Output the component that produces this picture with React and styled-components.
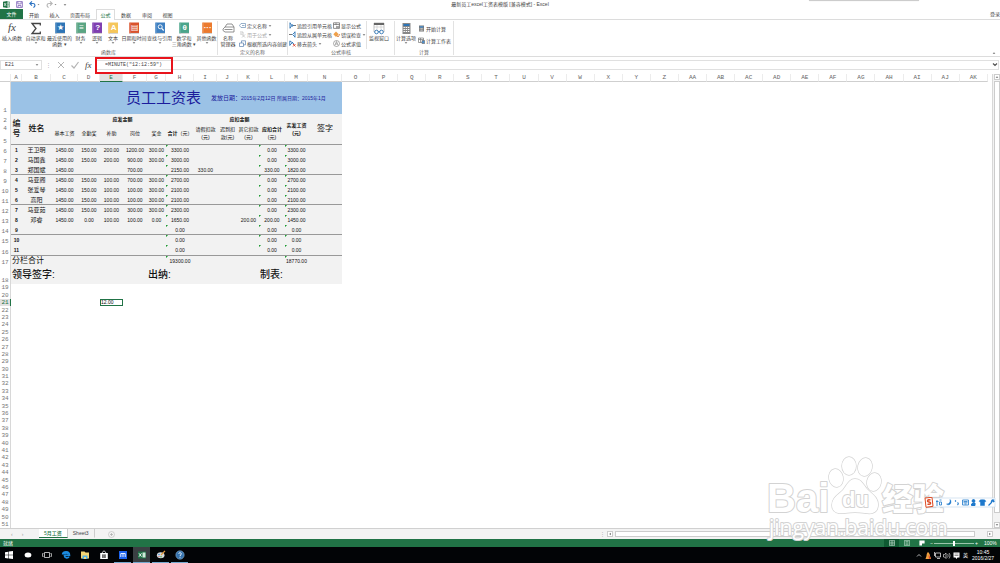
import React from 'react';
import styled, { createGlobalStyle } from 'styled-components';

const App = () => {
    return (
        <Ventana>
            <Global/>
            <BarraTitulo>
                <AccesoRapido>
                    <BotonPlano aria-label="Excel"><IconoExcel/></BotonPlano>
                    <BotonPlano aria-label="保存"><IconoGuardar/></BotonPlano>
                    <BotonPlano aria-label="撤消"><IconoDeshacer color="#2b72c2"/></BotonPlano>
                    <BotonPlano aria-label="恢复"><IconoDeshacer color="#b5b5b5" espejo/></BotonPlano>
                    <BotonPlano aria-label="自定义"><Flecha/></BotonPlano>
                </AccesoRapido>
                <Titulo>最新员工excel工资表模版 [兼容模式] - Excel</Titulo>
                <Sombra/>
            </BarraTitulo>
            <Pestanas>
                <Archivo>文件</Archivo>
                {pestanas.map(p => (
                    <Pestana key={p.texto} $ancho={p.ancho} $activa={p.texto === '公式'}>{p.texto}</Pestana>
                ))}
                <Entrar>登录</Entrar>
            </Pestanas>
            <Cinta>
                <Grupo $ancho={218}>
                    <Botones>
                        {libros.map(l => (
                            <BotonGrande key={l.texto} $ancho={l.ancho}>
                                <Libro {...l}/>
                                <span>{l.texto}</span>
                                {l.texto2 && <span>{l.texto2}</span>}
                                {l.menu && <Flecha/>}
                            </BotonGrande>
                        ))}
                    </Botones>
                    <NombreGrupo>函数库</NombreGrupo>
                </Grupo>
                <Grupo $ancho={70}>
                    <Botones>
                        <BotonGrande $ancho={20}>
                            <IconoEtiqueta/>
                            <span>名称</span>
                            <span>管理器</span>
                        </BotonGrande>
                        <Lista>
                            <BotonChico><Mini tipo="etiqueta"/>定义名称 <Flecha/></BotonChico>
                            <BotonChico $gris><Mini tipo="fx"/>用于公式 <Flecha/></BotonChico>
                            <BotonChico><Mini tipo="crear"/>根据所选内容创建</BotonChico>
                        </Lista>
                    </Botones>
                    <NombreGrupo>定义的名称</NombreGrupo>
                </Grupo>
                <Grupo $ancho={107}>
                    <Botones>
                        <Lista>
                            <BotonChico><Mini tipo="precede"/>追踪引用单元格</BotonChico>
                            <BotonChico><Mini tipo="depende"/>追踪从属单元格</BotonChico>
                            <BotonChico><Mini tipo="quitar"/>移去箭头 <Flecha/></BotonChico>
                        </Lista>
                        <Lista $borde>
                            <BotonChico><Mini tipo="mostrar"/>显示公式</BotonChico>
                            <BotonChico><Mini tipo="error"/>错误检查 <Flecha/></BotonChico>
                            <BotonChico><Mini tipo="evaluar"/>公式求值</BotonChico>
                        </Lista>
                        <BotonGrande $ancho={24}>
                            <IconoVentana/>
                            <span>监视窗口</span>
                        </BotonGrande>
                    </Botones>
                    <NombreGrupo>公式审核</NombreGrupo>
                </Grupo>
                <Grupo $ancho={59}>
                    <Botones>
                        <BotonGrande $ancho={22}>
                            <IconoCalculadora/>
                            <span>计算选项</span>
                            <Flecha/>
                        </BotonGrande>
                        <Lista $amplia>
                            <BotonChico><Mini tipo="calc"/>开始计算</BotonChico>
                            <BotonChico><Mini tipo="hoja"/>计算工作表</BotonChico>
                        </Lista>
                    </Botones>
                    <NombreGrupo>计算</NombreGrupo>
                </Grupo>
                <Plegar aria-label="折叠功能区"><Flecha arriba/></Plegar>
            </Cinta>
            <BarraFormula>
                <CajaNombre>
                    <Entrada aria-label="名称框" defaultValue="E21"/>
                    <Flecha/>
                </CajaNombre>
                <CajaBotones>
                    <Puntos>⋮</Puntos>
                    <BotonPlano aria-label="取消">
                        <svg width="8" height="8" viewBox="0 0 8 8"><path d="M1 1l6 6M7 1L1 7" stroke="#b4b4b4" strokeWidth="1"/></svg>
                    </BotonPlano>
                    <BotonPlano aria-label="输入">
                        <svg width="8" height="8" viewBox="0 0 8 8"><path d="M0.500 4.500l2.500 2.500 4.500-6" fill="none" stroke="#b4b4b4" strokeWidth="1.200"/></svg>
                    </BotonPlano>
                    <BotonFx>fx</BotonFx>
                </CajaBotones>
                <CajaFormula>
                    <Entrada aria-label="编辑栏" $formula defaultValue={'=MINUTE("12:12:59")'}/>
                    <svg width="6" height="4" viewBox="0 0 6 4"><path d="M1 0.500l2 2 2-2" fill="none" stroke="#555" strokeWidth="1.200"/></svg>
                    <Marco/>
                </CajaFormula>
            </BarraFormula>
            <Zona>
                <Hoja>
                    <colgroup>
                        <Col $ancho={11}/>
                        {anchos.map((a, i) => <Col key={i} $ancho={a}/>)}
                        {letrasExtra.map(l => <col key={l}/>)}
                    </colgroup>
                    <thead>
                        <tr>
                            <Letra/>
                            {letras.map(l => <Letra key={l} $activa={l === 'E'}>{l}</Letra>)}
                        </tr>
                    </thead>
                    <tbody>
                        <Fila $alto={32}>
                            <Numero>1</Numero>
                            <Banda colSpan={14}>
                                <Encabezado>
                                    <strong>员工工资表</strong>
                                    <em>发放日期：</em>
                                    <small>2015年2月12日 所属日期：2015年1月</small>
                                </Encabezado>
                            </Banda>
                            <Vacia colSpan={23} rowSpan={17}/>
                        </Fila>
                        <Fila $alto={10}>
                            <Numero>2</Numero>
                            <Celda rowSpan={3} $tam={8} $linea $medio>编<br/>号</Celda>
                            <Celda rowSpan={3} $tam={8} $linea $medio>姓名</Celda>
                            <Celda colSpan={6} $negrita>应发金额</Celda>
                            <Celda colSpan={4} $negrita>应扣金额</Celda>
                            <Celda rowSpan={3} $negrita $linea>实发工资<br/>(元)</Celda>
                            <Celda rowSpan={3} $tam={8} $linea>签字</Celda>
                        </Fila>
                        <Fila $alto={8}>
                            <Numero>4</Numero>
                            {['基本工资', '全勤奖', '补助', '岗位', '奖金'].map(t => <Celda key={t} rowSpan={2} $linea $alza>{t}</Celda>)}
                            <Celda rowSpan={2} $linea $alza><b>合计</b>（元）</Celda>
                            <Celda rowSpan={2} $linea $alza>请假扣款<br/>(元)</Celda>
                            <Celda rowSpan={2} $linea $alza>迟到扣<br/>款(元)</Celda>
                            <Celda rowSpan={2} $linea $alza>其它扣款<br/>(元)</Celda>
                            <Celda rowSpan={2} $linea $alza><b>应扣合计</b><br/>(元)</Celda>
                        </Fila>
                        <Fila $alto={13}><Numero>5</Numero></Fila>
                        {empleados.map((e, i) => {
                            const linea = [2, 5, 8, 10].includes(i);
                            return (
                                <Fila key={i} $alto={i === 10 ? 11 : 10}>
                                    <Numero>{i + 6}</Numero>
                                    <Celda $negrita $linea={linea}>{i + 1}</Celda>
                                    <Celda $tam={6} $linea={linea}>{e[0]}</Celda>
                                    {e.slice(1).map((v, j) => (
                                        <Celda key={j} $linea={linea} $marca={[5, 9, 10].includes(j)}>{v}</Celda>
                                    ))}
                                    <Celda $linea={linea}/>
                                </Fila>
                            );
                        })}
                        <Fila $alto={10}>
                            <Numero>17</Numero>
                            <Celda colSpan={7} $tam={8} $izq>分栏合计</Celda>
                            <Celda $marca>19300.00</Celda>
                            <Celda colSpan={4}/>
                            <Celda $marca>18770.00</Celda>
                            <Celda/>
                        </Fila>
                        <Fila $alto={18}>
                            <Numero>18</Numero>
                            <Celda colSpan={6} $tam={10} $izq $medio>领导签字:</Celda>
                            <Celda colSpan={5} $tam={10} $izq $medio>出纳:</Celda>
                            <Celda colSpan={3} $tam={10} $izq $medio>制表:</Celda>
                        </Fila>
                        {libres.map(n => n === 21 ? (
                            <tr key={n}>
                                <Numero $activa>{n}</Numero>
                                <Vacia colSpan={4}/>
                                <Seleccion>12.00</Seleccion>
                                <Vacia colSpan={32}/>
                            </tr>
                        ) : (
                            <tr key={n}>
                                <Numero>{n}</Numero>
                                <Vacia colSpan={37}/>
                            </tr>
                        ))}
                    </tbody>
                </Hoja>
                <BarraVertical>
                    <BotonScroll aria-label="向上"><Flecha arriba/></BotonScroll>
                    <PulgarVertical/>
                    <BotonScroll aria-label="向下"><Flecha/></BotonScroll>
                </BarraVertical>
            </Zona>
            <BarraHojas>
                <Navegar>
                    <BotonPlano aria-label="上一张">‹</BotonPlano>
                    <BotonPlano aria-label="下一张">›</BotonPlano>
                </Navegar>
                <PestanaHoja $activa>5月工资</PestanaHoja>
                <PestanaHoja>Sheet3</PestanaHoja>
                <Agregar aria-label="新工作表">
                    <svg width="7" height="7" viewBox="0 0 7 7"><circle cx="3.5" cy="3.5" r="3" fill="none" stroke="#bbb" strokeWidth=".6"/><path d="M3.500 2v3M2 3.500h3" stroke="#aaa" strokeWidth=".7"/></svg>
                </Agregar>
                <BarraHorizontal>
                    <Puntos>⋮</Puntos>
                    <BotonScroll aria-label="向左"><Flecha giro={90}/></BotonScroll>
                    <PulgarHorizontal/>
                    <BotonScroll aria-label="向右"><Flecha giro={-90}/></BotonScroll>
                </BarraHorizontal>
            </BarraHojas>
            <BarraEstado>
                <span>就绪</span>
                <Vistas>
                    <Vista $activa aria-label="普通"><IconoVista tipo={0}/></Vista>
                    <Vista aria-label="页面布局"><IconoVista tipo={1}/></Vista>
                    <Vista aria-label="分页预览"><IconoVista tipo={2}/></Vista>
                </Vistas>
                <Escala>
                    <BotonPlano aria-label="缩小">−</BotonPlano>
                    <Deslizador type="range" aria-label="缩放" defaultValue="50"/>
                    <BotonPlano aria-label="放大">+</BotonPlano>
                </Escala>
                <Porcentaje>100%</Porcentaje>
            </BarraEstado>
            <BarraTareas>
                {['inicio', 'voz', 'tareas', 'edge', 'carpeta', 'tienda', 'maxthon', 'excel', 'paint', 'ayuda'].map((t, i) => (
                    <Tarea key={t} aria-label={t} $abierta={i > 5} $activa={t === 'excel'}><IconoTarea tipo={t}/></Tarea>
                ))}
                <Bandeja>
                    <Bandejita/>
                    <span>英</span>
                    <Reloj><time>10:45</time><time>2016/2/27</time></Reloj>
                </Bandeja>
            </BarraTareas>
            <MarcaAgua/>
            <BarraIme/>
        </Ventana>
    )
}

const pestanas = [
    {texto: '开始', ancho: 22}, {texto: '插入', ancho: 19}, {texto: '页面布局', ancho: 32}, {texto: '公式', ancho: 19},
    {texto: '数据', ancho: 22}, {texto: '审阅', ancho: 20}, {texto: '视图', ancho: 21},
];
const libros = [
    {texto: '插入函数', ancho: 24, signo: 'fx'},
    {texto: '自动求和', ancho: 23, signo: 'Σ', menu: true},
    {texto: '最近使用的', texto2: '函数 ▾', ancho: 25, color: '#2e75b6', signo: '★'},
    {texto: '财务', ancho: 17, color: '#5aa583', signo: '≡', menu: true},
    {texto: '逻辑', ancho: 16, color: '#7f3fb0', signo: '?', menu: true},
    {texto: '文本', ancho: 16, color: '#f5c65b', signo: 'A', menu: true},
    {texto: '日期和时间', ancho: 26, color: '#d9532c', signo: '▤', menu: true},
    {texto: '查找与引用', ancho: 25, color: '#3d7fc1', signo: 'lupa', menu: true},
    {texto: '数学和', texto2: '三角函数 ▾', ancho: 24, color: '#4ba58b', signo: 'θ'},
    {texto: '其他函数', ancho: 21, color: '#eb7a2f', signo: '···', menu: true},
];
const anchos = [11, 29, 27, 22, 23, 24, 19, 28, 23, 21, 21, 26, 23, 34];
const nombreColumna = i => i < 26 ? String.fromCharCode(65 + i) : 'A' + String.fromCharCode(39 + i);
const letras = Array.from({length: 37}, (_, i) => nombreColumna(i));
const letrasExtra = letras.slice(14);
const libres = Array.from({length: 33}, (_, i) => i + 19);
const empleados = [
    ['王卫明', '1450.00', '150.00', '200.00', '1200.00', '300.00', '3300.00', '', '', '', '0.00', '3300.00'],
    ['马国鑫', '1450.00', '150.00', '200.00', '900.00', '300.00', '3000.00', '', '', '', '0.00', '3000.00'],
    ['郑国斌', '1450.00', '', '', '700.00', '', '2150.00', '330.00', '', '', '330.00', '1820.00'],
    ['马亚阁', '1450.00', '150.00', '100.00', '700.00', '300.00', '2700.00', '', '', '', '0.00', '2700.00'],
    ['张爱琴', '1450.00', '150.00', '100.00', '100.00', '300.00', '2100.00', '', '', '', '0.00', '2100.00'],
    ['高阳', '1450.00', '150.00', '100.00', '100.00', '300.00', '2100.00', '', '', '', '0.00', '2100.00'],
    ['马亚茹', '1450.00', '150.00', '100.00', '300.00', '300.00', '2300.00', '', '', '', '0.00', '2300.00'],
    ['邓睿', '1450.00', '0.00', '100.00', '100.00', '0.00', '1650.00', '', '', '200.00', '200.00', '1450.00'],
    ['', '', '', '', '', '', '0.00', '', '', '', '0.00', '0.00'],
    ['', '', '', '', '', '', '0.00', '', '', '', '0.00', '0.00'],
    ['', '', '', '', '', '', '0.00', '', '', '', '0.00', '0.00'],
];

const Flecha = ({arriba, giro}) => (
    <svg width="4" height="4" viewBox="0 0 4 4">
        <path d="M0.700 1.200h2.600l-1.300 1.600z" fill="#666" transform={`rotate(${arriba ? 180 : giro || 0} 2 2)`}/>
    </svg>
);
const IconoExcel = () => (
    <svg width="7" height="7" viewBox="0 0 8 8">
        <path d="M4 1h3.500v6H4z" fill="#fff" stroke="#217346" strokeWidth=".6"/>
        <path d="M5 2.500h2M5 4h2M5 5.500h2" stroke="#217346" strokeWidth=".6"/>
        <path d="M0 .8L5 0v8L0 7.200z" fill="#217346"/>
        <path d="M1.300 2.400l2.200 3.200M3.500 2.400L1.300 5.600" stroke="#fff" strokeWidth=".8"/>
    </svg>
);
const IconoGuardar = () => (
    <svg width="7" height="7" viewBox="0 0 7 7">
        <path d="M.6.6h5.800v5.800H.6zM1.800.6v2.300h3.400V.6M2 6.400V4.500h3v1.900" fill="none" stroke="#8064b8" strokeWidth=".8"/>
    </svg>
);
const IconoDeshacer = ({color, espejo}) => (
    <svg width="11" height="7" viewBox="0 0 11 7">
        <g transform={espejo ? 'matrix(-1 0 0 1 7 0)' : undefined} fill="none" stroke={color} strokeWidth="1.100">
            <path d="M3 .4L.8 2.500 3 4.600M1 2.500h3c2.400 0 2.600 3 .4 4"/>
        </g>
        <path d="M8.500 3h2l-1 1.200z" fill="#888"/>
    </svg>
);
const Libro = ({color, signo}) => {
    if (!color) {
        return (
            <svg width="16" height="13" viewBox="0 0 16 13" overflow="visible">
                {signo === 'fx'
                    ? <text x="8" y="9" textAnchor="middle" fontFamily="Liberation Serif, serif" fontStyle="italic" fontSize="11" fill="#444">fx</text>
                    : <path d="M12.300 3.600V1.500H4l4 5-4 5h8.300V9.400" fill="none" stroke="#444" strokeWidth="1.300"/>}
            </svg>
        );
    }
    return (
        <svg width="10" height="13" viewBox="0 0 10 13">
            <path d="M0 .5h2v11H0z" fill={color} opacity=".75"/>
            <path d="M1.500 .5H10v10.500H1.500z" fill={color}/>
            <path d="M1 11.400h9" stroke="#bbb" strokeWidth=".7"/>
            {signo === 'lupa'
                ? <g fill="none" stroke="#fff"><circle cx="5.200" cy="4.800" r="2" strokeWidth=".9"/><path d="M6.700 6.300l2 2.200" strokeWidth="1.200"/></g>
                : <text x="5.700" y="8.400" textAnchor="middle" fontFamily="Liberation Sans, DejaVu Sans, sans-serif" fontWeight="bold" fontSize="8" fill="#fff">{signo}</text>}
        </svg>
    );
};
const IconoEtiqueta = () => (
    <svg width="13" height="13" viewBox="0 0 13 13">
        <path d="M1 7l2-2h9v5H3L1 8.500zM3 5l2-3h5l2 3M2.500 7.500h8" fill="#fff" stroke="#777" strokeWidth=".8"/>
    </svg>
);
const IconoVentana = () => (
    <svg width="12" height="13" viewBox="0 0 12 13">
        <path d="M1 1h10v9H1z" fill="#fff" stroke="#999" strokeWidth=".6"/>
        <path d="M1 1h10v2H1z" fill="#666"/>
        <path d="M1 5h10M4 3v7M8 3v7" stroke="#bbb" strokeWidth=".5"/>
        <g fill="#fff" stroke="#2e75b6" strokeWidth=".9"><circle cx="3.500" cy="10" r="1.800"/><circle cx="8.500" cy="10" r="1.800"/><path d="M5.300 9.500h1.400"/></g>
    </svg>
);
const IconoCalculadora = () => (
    <svg width="9" height="13" viewBox="0 0 9 13">
        <path d="M.5 1h8v11h-8z" fill="#888"/>
        <path d="M1.500 2h6v2h-6z" fill="#2e75b6"/>
        <path d="M1.500 5.500h6M1.500 7.500h6M1.500 9.500h6" stroke="#fff" strokeDasharray="1.400 .8"/>
    </svg>
);
const dibujos = {
    etiqueta: <path d="M.5 3.500L2 1.500h4.500v4H2zM3 3.500h2.500" fill="none" stroke="#6d8fb5" strokeWidth=".7"/>,
    fx: <path d="M1 1h3v3M3 3.500L6 6.500M6 3.500L3 6.500M1 3h2" fill="none" stroke="#b5b5b5" strokeWidth=".7"/>,
    crear: <path d="M.5 3h4v3.500h-4zM2.500 3V.8h4v4h-2" fill="none" stroke="#5b82b0" strokeWidth=".7"/>,
    precede: <g fill="none" stroke="#2e75b6" strokeWidth=".9"><path d="M1 .5v6M1 1l2 2.500L1 6"/><path d="M4 3.500h3" stroke="#666"/><circle cx="3.500" cy="3.500" r=".7"/></g>,
    depende: <g fill="none" stroke="#2e75b6" strokeWidth=".9"><path d="M6 .5v6M6 1L3.500 3.500 6 6"/><path d="M0 3.500h3" stroke="#666"/></g>,
    quitar: <g fill="none" strokeWidth=".9"><path d="M.8.8v5M1 1l4 3M1 5l3-3" stroke="#2e75b6"/><path d="M4 4l2.500 2.500M6.500 4L4 6.500" stroke="#d9432c"/></g>,
    mostrar: <g fill="none" stroke="#666" strokeWidth=".7"><path d="M.5.8h6v5.600h-6zM.5 2.500h6M3 .8v2M3 4l3 2M6 4L3 6"/></g>,
    error: <g><path d="M3 .5L5.800 3.300 3 6 .3 3.300z" fill="#f0a14a"/><path d="M4 4.500l1 1.500 2-3" fill="none" stroke="#d0702c" strokeWidth=".8"/></g>,
    evaluar: <g fill="none" stroke="#777" strokeWidth=".6"><circle cx="3.500" cy="3.500" r="3"/><path d="M2 5.200l1.500-3.700L5 5.200M2.600 4h1.800"/></g>,
    calc: <g><path d="M1 .5h5v6H1z" fill="#777"/><path d="M1.700 1.200h3.600v1.400H1.700z" fill="#4a90d0"/><path d="M1.700 3.700h3.600M1.700 5.200h3.600" stroke="#fff" strokeWidth=".7" strokeDasharray=".9 .4"/></g>,
    hoja: <g fill="none" strokeWidth=".7"><path d="M.5 1h5v4.500h-5zM.5 2.500h5M2.500 1v4.500" stroke="#777"/><path d="M4 3.500h2.700v3H4z" fill="#4a90d0" stroke="#777"/></g>,
};
const Mini = ({tipo}) => <svg width="7" height="7" viewBox="0 0 7 7">{dibujos[tipo]}</svg>;
const IconoVista = ({tipo}) => (
    <svg width="6" height="6" viewBox="0 0 6 6">
        {tipo === 0 && <path d="M.4.4h5.200v5.200H.4zM.4 2.200h5.200M.4 3.900h5.200M3 .4v5.200" fill="none" stroke="#cfe6d8" strokeWidth=".6"/>}
        {tipo === 1 && <path d="M.4.4h5.200v5.200H.4zM1.500 1.600h3M1.500 3h3M1.500 4.300h3" fill="none" stroke="#cfe6d8" strokeWidth=".6"/>}
        {tipo === 2 && <path d="M.4.4h5.200v3.200H3v2H.4z" fill="#fff"/>}
    </svg>
);
const tareas = {
    inicio: <path d="M1 2.200l3.300-.5v3.100H1zM4.800 1.600L9 1v3.800H4.800zM1 5.300h3.300v3.100L1 7.900zM4.800 5.300H9V9l-4.200-.6z" fill="#fff"/>,
    voz: <ellipse cx="5" cy="5" rx="3.400" ry="2.500" fill="#fff"/>,
    tareas: <path d="M2.500 2.500h5v5h-5zM1.500 3.500H.6v3h.9M8.500 3.500h.9v3h-.9" fill="none" stroke="#ddd" strokeWidth=".8"/>,
    edge: <path d="M1.500 4.500C2.300 1 8.500.8 8.500 5.400H3.400c0 2.600 2.900 3 4.700 1.800M3.500 4.100c.8-1.700 3-1.400 3 .2" fill="none" stroke="#1b8be0" strokeWidth="1.600"/>,
    carpeta: <g><path d="M1 1.500h3.500l1 1H9v6H1z" fill="#f4d674"/><path d="M2.500 5.500h5V9h-5z" fill="#55b3e6"/><path d="M4 7h2v2H4z" fill="#f4d674"/></g>,
    tienda: <g><path d="M1.200 3h7.600v6H1.200z" fill="#fff"/><path d="M3.300 3c0-2.500 3.400-2.500 3.400 0" fill="none" stroke="#fff" strokeWidth=".8"/><path d="M3.200 4.400h1.500v1.400H3.200zM5.200 4.400h1.500v1.400H5.200zM3.200 6.300h1.500v1.400H3.200zM5.200 6.300h1.500v1.400H5.200z" fill="#111"/></g>,
    maxthon: <g><path d="M1 1h8v8H1z" fill="#1c62ea"/><path d="M2.800 7V3.500h4.400V7M5 3.500V7" fill="none" stroke="#fff" strokeWidth=".9"/></g>,
    excel: <g><path d="M1 1.500h8v7H1z" fill="#1f7145"/><path d="M5.500 2.500h3v5h-3z" fill="#cfe8d8"/><path d="M2 3.300l2.500 3.400M4.500 3.300L2 6.700" stroke="#fff" strokeWidth=".9"/></g>,
    paint: <g><ellipse cx="4.700" cy="5.200" rx="3.800" ry="3" fill="#d5dbe0"/><circle cx="3" cy="4.500" r=".8" fill="#4a90d0"/><circle cx="5" cy="6.700" r=".8" fill="#58a848"/><circle cx="3" cy="6.500" r=".6" fill="#d9432c"/><path d="M9 .8L5 5" stroke="#e39b3a" strokeWidth="1.200"/></g>,
    ayuda: <g><circle cx="5" cy="5" r="4.200" fill="#3472ad" stroke="#9cc0df" strokeWidth=".5"/><path d="M3.700 3.900c.2-1.700 2.700-1.500 2.600.1 0 .8-1.300 1-1.300 2M5 6.800v.9" fill="none" stroke="#fff" strokeWidth=".9"/></g>,
};
const IconoTarea = ({tipo}) => <svg width="10" height="10" viewBox="0 0 10 10">{tareas[tipo]}</svg>;
const Bandejita = () => (
    <svg width="45" height="9" viewBox="0 0 45 9">
        <path d="M1 5.500l2-2 2 2" fill="none" stroke="#ddd" strokeWidth=".8"/>
        <path d="M12 1c1 1 2 2 2 4l1 3H9.500l1-3c0-2 .5-3 1.500-4z" fill="#f0a040"/>
        <path d="M12.500 4l2.500 3-2 1z" fill="#d9432c"/>
        <path d="M19.500 2h5v4h-5zM21 7.500h3M18.500 1v4" fill="none" stroke="#ddd" strokeWidth=".8"/>
        <path d="M27.500 3.500h1l1.500-1.500v5.500l-1.500-1.500h-1zM31.500 3c.8.800.8 2.500 0 3.500M33 2c1.300 1.300 1.300 4 0 5.500" fill="none" stroke="#ddd" strokeWidth=".7"/>
        <path d="M37.500 1.500h6v5h-2l-1 1.500-1-1.500h-2z" fill="#fff"/>
        <path d="M38.500 3h4M38.500 4.500h4" stroke="#333" strokeWidth=".5"/>
    </svg>
);
const MarcaAgua = () => (
    <CapaMarca width="186" height="92" viewBox="0 0 186 92" aria-hidden="true">
        <g fill="#fff" stroke="#d3d3d3" strokeWidth="2" paintOrder="stroke" strokeLinejoin="round">
            <text x="2" y="60" fontFamily="Liberation Sans, sans-serif" fontWeight="bold" fontSize="40">Bai</text>
            <text x="117" y="58" fontFamily="Noto Sans CJK SC, sans-serif" fontWeight="900" fontSize="31">经验</text>
            <g strokeWidth="1.400">
                <ellipse cx="71" cy="26" rx="7" ry="9" transform="rotate(-12 71 26)"/>
                <ellipse cx="84" cy="14" rx="7" ry="9"/>
                <ellipse cx="100" cy="15" rx="7" ry="9" transform="rotate(12 100 15)"/>
                <ellipse cx="109" cy="30" rx="7" ry="9" transform="rotate(12 109 30)"/>
                <path d="M90 27c6 0 8 5 12 10 5 5 12 9 11 17-1 8-8 8-13 7-7-1-13-1-20 0-6 1-13 0-13-8 0-7 6-10 11-15 4-5 6-11 12-11z"/>
            </g>
            <text x="77" y="55" fontFamily="Liberation Sans, sans-serif" fontWeight="bold" fontSize="22">du</text>
            <text x="4" y="83" fontFamily="Open Sans, sans-serif" fontSize="21">jingyan.baidu.com</text>
        </g>
    </CapaMarca>
);
const BarraIme = () => (
    <CapaIme aria-hidden="true">
        <svg width="72" height="11" viewBox="0 0 72 11">
            <path d="M5 1h66v9H5z" fill="#fff" stroke="#bcd4ea" strokeWidth=".6"/>
            <path d="M1 1l7-.7 1 9-7 1z" fill="#fff" stroke="#dd4a24"/>
            <path d="M6.500 3C3 2 2.800 5 5 5s2.500 3-1.500 2.200" fill="none" stroke="#dd4a24" strokeWidth="1.500"/>
            <g fill="none" stroke="#1d78cc">
                <path d="M13 3v6M12 4.500h2.500M15.500 3h2M15.500 5h2v3h-2z" strokeWidth=".8"/>
                <path d="M26 2.500c.5 3-1 4.500-3.500 4.500 1 1.500 4.500 1 4.500-2 0-1-.3-2-1-2.500z" fill="#1d78cc" strokeWidth=".4"/>
                <path d="M31 3.500l1 1M33.500 5.500c1 .5 1 1.500 0 2.500" strokeWidth="1.100"/>
                <path d="M38.500 3h6v5h-6zM39.500 4.500h4M39.500 5.800h4M40.500 7h2" strokeWidth=".8"/>
                <circle cx="49.500" cy="4" r="1.400" fill="#1d78cc"/>
                <path d="M47.500 8.500v-1.500l2-1h1.500v2.500z" fill="#1d78cc"/>
                <path d="M56 3l1.500-.3h2L61 3l.8 1.500-1.300.6v3.400h-4V5.100l-1.300-.6z" fill="#1d78cc" strokeWidth=".5"/>
                <path d="M64.500 8.500l3-3c-.5-1.500.5-3 2-2.500l-1 1 .8.800 1.200-.8" strokeWidth="1.200"/>
            </g>
        </svg>
    </CapaIme>
);

const Global = createGlobalStyle`
    *{
        box-sizing: border-box;
    }
    body{
        margin: 0;
    }
    button, input{
        font: inherit;
        color: inherit;
        padding: 0;
        border: none;
        background: none;
    }
    svg{
        display: block;
        flex-shrink: 0;
    }
`;
const Ventana = styled.div`
    position: relative;
    display: flex;
    flex-direction: column;
    min-height: 100vh;
    background: #fff;
    color: #444;
    font-family: "Liberation Sans", "Noto Sans CJK SC", sans-serif;
    font-size: 5px;
    line-height: 6px;
    overflow: hidden;
`;
const BarraTitulo = styled.header`
    display: grid;
    grid-template-columns: 1fr auto 1fr;
    height: 9px;
`;
const AccesoRapido = styled.div`
    display: flex;
    align-items: center;
    gap: 6px;
    padding-left: 3px;
`;
const Titulo = styled.div`
    line-height: 9px;
`;
const Sombra = styled.div`
    justify-self: end;
    width: 110px;
    height: 1px;
    margin-right: 81px;
    background: #ccc;
    box-shadow: 0 0 1px #ccc;
`;
const BotonPlano = styled.button`
    display: flex;
    align-items: center;
`;
const Pestanas = styled.nav`
    display: flex;
    height: 11px;
    border-bottom: 1px solid #dcdcdc;
`;
const Archivo = styled.button`
    width: 23px;
    background: #217346;
    color: #fff;
    line-height: 10px;
`;
const Pestana = styled.button`
    width: ${props => props.$ancho}px;
    line-height: 10px;
    height: 11px;
    white-space: nowrap;
    ${props => props.$activa && `
        color: #217346;
        background: #fff;
        border: 1px solid #dcdcdc;
        border-width: 1px 1px 0;
        line-height: 9px;
    `}
`;
const Entrar = styled.button`
    margin-left: auto;
    line-height: 10px;
`;
const Cinta = styled.div`
    display: flex;
    height: 37px;
    border-bottom: 1px solid #dcdcdc;
`;
const Grupo = styled.section`
    display: flex;
    flex-direction: column;
    width: ${props => props.$ancho}px;
    margin: 1px 0;
    border-right: 1px solid #e2e2e2;
`;
const Botones = styled.div`
    display: flex;
    flex: 1;
`;
const NombreGrupo = styled.div`
    text-align: center;
    color: #666;
`;
const BotonGrande = styled.button`
    display: flex;
    flex-direction: column;
    align-items: center;
    width: ${props => props.$ancho}px;
    padding-top: 1px;
    white-space: nowrap;
    flex-shrink: 0;
`;
const Lista = styled.div`
    display: flex;
    flex-direction: column;
    gap: ${props => props.$amplia ? 5 : 2}px;
    padding: ${props => props.$amplia ? '4px 0 0 1px' : '1px 0 0 1px'};
    border-right: ${props => props.$borde ? '1px solid #e2e2e2' : 'none'};
`;
const BotonChico = styled.button`
    display: flex;
    align-items: center;
    gap: 1px;
    height: 7px;
    white-space: nowrap;
    color: ${props => props.$gris ? '#aaa' : '#444'};
`;
const Plegar = styled.button`
    align-self: flex-end;
    margin: 0 4px 1px auto;
`;
const BarraFormula = styled.div`
    display: flex;
    gap: 4px;
    height: 17px;
    padding: 3px 1px 4px 0;
`;
const CajaNombre = styled.div`
    display: flex;
    align-items: center;
    width: 42px;
    padding: 0 2px 0 4px;
    border: 1px solid #e0e0e0;
`;
const Entrada = styled.input`
    flex: 1;
    min-width: 0;
    height: 8px;
    padding-left: ${props => props.$formula ? 8 : 0}px;
    font-family: "Liberation Mono", monospace;
`;
const CajaBotones = styled.div`
    display: flex;
    align-items: center;
    gap: 6px;
    width: 46px;
`;
const Puntos = styled.span`
    color: #aaa;
`;
const BotonFx = styled.button`
    font: italic 9px/9px "Liberation Serif", serif;
    color: #444;
`;
const CajaFormula = styled.div`
    position: relative;
    display: flex;
    align-items: center;
    flex: 1;
    border: 1px solid #e0e0e0;
`;
const Marco = styled.div`
    position: absolute;
    top: -4px;
    left: -2px;
    width: 78px;
    height: 17px;
    border: 2px solid #e8141c;
`;
const Zona = styled.main`
    display: flex;
    flex: 1;
`;
const Hoja = styled.table`
    flex: 1;
    width: 0;
    height: 454px;
    table-layout: fixed;
    border-collapse: separate;
    border-spacing: 0;
    td, th{
        padding: 0;
    }
`;
const Col = styled.col`
    width: ${props => props.$ancho}px;
`;
const Letra = styled.th`
    height: 8px;
    font: 6px/6px "Liberation Mono", monospace;
    vertical-align: bottom;
    color: ${props => props.$activa ? '#217346' : '#666'};
    background: ${props => props.$activa ? '#e1e1e1' : '#fff'};
    border-right: 1px solid #ececec;
    border-bottom: 1px solid ${props => props.$activa ? '#217346' : '#cfcfcf'};
`;
const Fila = styled.tr`
    height: ${props => props.$alto}px;
`;
const Numero = styled.th`
    font: 6px/6px "Liberation Mono", monospace;
    vertical-align: bottom;
    color: ${props => props.$activa ? '#217346' : '#777'};
    background: ${props => props.$activa ? '#e1e1e1' : '#fff'};
    border-right: 1px solid ${props => props.$activa ? '#217346' : '#d8d8d8'};
`;
const Vacia = styled.td`
    background: #fff;
`;
const Banda = styled.td`
    background: #9bc2e6;
`;
const Encabezado = styled.div`
    display: flex;
    align-items: center;
    padding-left: 115px;
    line-height: 16px;
    color: #1c1c9c;
    white-space: nowrap;
    strong{
        font-size: 15px;
        font-weight: 400;
        margin-right: 10px;
    }
    em{
        font-size: 6px;
        font-style: normal;
    }
    small{
        font-size: 5px;
    }
`;
const Celda = styled.td`
    background: #f2f2f2;
    color: #111;
    text-align: ${props => props.$izq ? 'left' : 'center'};
    font-size: ${props => props.$tam || 5}px;
    line-height: ${props => props.$tam > 6 ? 10 : 8}px;
    font-weight: ${props => props.$negrita ? 700 : props.$medio ? 500 : 400};
    white-space: nowrap;
    box-shadow: ${props => props.$linea ? 'inset 0 -1px #999' : 'none'};
    && {
        padding-bottom: ${props => props.$alza ? 3 : 1}px;
    }
    ${props => props.$marca && `
        background: linear-gradient(135deg, #1e9a33 0 1px, transparent 2px) 0 0 / 3px 3px no-repeat, #f2f2f2;
    `}
    ${props => props.$izq && `
        text-indent: 1px;
        && {
            padding-bottom: 0;
        }
    `}
`;
const Seleccion = styled.td`
    outline: 1px solid #217346;
    outline-offset: -1px;
    color: #111;
    line-height: 6px;
    text-indent: 1px;
`;
const BarraVertical = styled.div`
    display: flex;
    flex-direction: column;
    align-items: center;
    width: 8px;
    margin-left: 4px;
    background: #f3f3f3;
    border-left: 1px solid #d8d8d8;
`;
const BotonScroll = styled.button`
    display: flex;
    align-items: center;
    justify-content: center;
    width: 6px;
    height: 6px;
    background: #fff;
    border: 1px solid #ccc;
`;
const PulgarVertical = styled.div`
    flex: 1;
    width: 6px;
    margin: 1px 0 9px;
    background: #fff;
    border: 1px solid #ccc;
`;
const BarraHojas = styled.div`
    display: flex;
    height: 11px;
    background: #f3f3f3;
    border-top: 1px solid #d0d0d0;
`;
const Navegar = styled.div`
    display: flex;
    gap: 9px;
    width: 39px;
    padding-left: 11px;
    color: #999;
`;
const PestanaHoja = styled.button`
    height: 9px;
    padding: 0 5px;
    line-height: 8px;
    background: ${props => props.$activa ? '#fff' : 'transparent'};
    color: ${props => props.$activa ? '#217346' : '#444'};
    border-bottom: 1px solid ${props => props.$activa ? '#217346' : 'transparent'};
    border-right: 1px solid #ccc;
    font-weight: ${props => props.$activa ? 500 : 400};
`;
const Agregar = styled.button`
    margin-left: 13px;
`;
const BarraHorizontal = styled.div`
    display: flex;
    align-items: center;
    gap: 2px;
    width: 393px;
    margin-left: auto;
    margin-right: 7px;
`;
const PulgarHorizontal = styled.div`
    flex: 1;
    height: 6px;
    margin-right: 10px;
    background: #fff;
    border: 1px solid #ccc;
`;
const BarraEstado = styled.footer`
    display: flex;
    align-items: center;
    height: 8px;
    padding: 0 3px;
    background: #217346;
    color: #fff;
`;
const Vistas = styled.div`
    display: flex;
    margin-left: auto;
`;
const Vista = styled.button`
    display: flex;
    align-items: center;
    justify-content: center;
    width: 15px;
    height: 8px;
    background: ${props => props.$activa ? '#0f5a32' : 'transparent'};
`;
const Escala = styled.div`
    display: flex;
    align-items: center;
    gap: 1px;
    margin: 0 6px 0 1px;
`;
const Deslizador = styled.input`
    appearance: none;
    width: 40px;
    height: 6px;
    margin: 0;
    background: linear-gradient(#9cc5ad, #9cc5ad) center / 100% 1px no-repeat;
    &::-webkit-slider-thumb{
        appearance: none;
        width: 2px;
        height: 5px;
        background: #fff;
    }
`;
const Porcentaje = styled.span`
    width: 13px;
`;
const BarraTareas = styled.div`
    display: flex;
    height: 16px;
    background: #020406;
    color: #fff;
`;
const Tarea = styled.button`
    display: flex;
    align-items: center;
    justify-content: center;
    width: 17px;
    margin-right: 2px;
    background: ${props => props.$activa ? '#3a3f42' : 'transparent'};
    border-bottom: 1px solid ${props => props.$abierta ? '#76a9cf' : 'transparent'};
`;
const Bandeja = styled.div`
    display: flex;
    align-items: center;
    gap: 2px;
    margin-left: auto;
    padding-right: 4px;
`;
const Reloj = styled.div`
    display: flex;
    flex-direction: column;
    align-items: center;
    width: 26px;
`;
const CapaMarca = styled.svg`
    position: absolute;
    right: 49px;
    bottom: 19px;
    pointer-events: none;
`;
const CapaIme = styled.div`
    position: absolute;
    right: 4px;
    bottom: 55px;
`;
export default App;
